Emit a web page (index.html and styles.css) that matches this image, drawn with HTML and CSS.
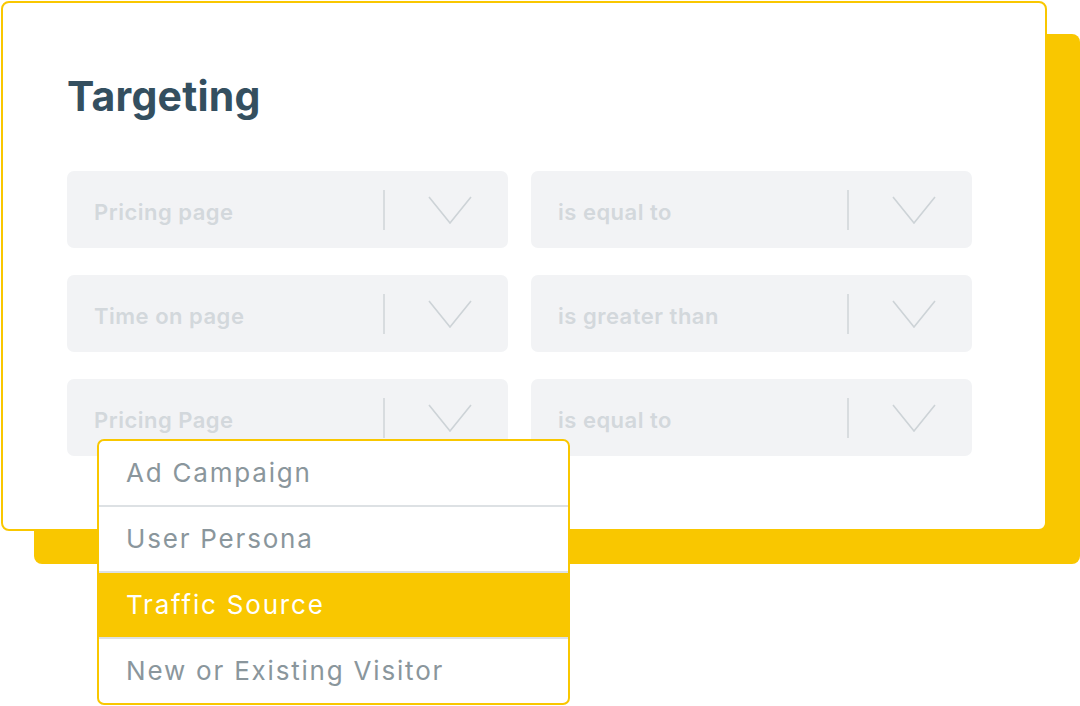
FILE: index.html
```html
<!DOCTYPE html>
<html>
<head>
<meta charset="utf-8">
<link rel="stylesheet" href="styles.css">
</head>
<body>
<div class="stage">
  <div class="card">
    <h1 class="title">Targeting</h1>
    <div class="fields">
      <div class="field"><span class="label">Pricing page</span><span class="divider"></span><svg class="chev" viewBox="0 0 44 28"><polyline points="1,1 22,27 43,1"/></svg></div>
      <div class="field"><span class="label">is equal to</span><span class="divider"></span><svg class="chev" viewBox="0 0 44 28"><polyline points="1,1 22,27 43,1"/></svg></div>
      <div class="field"><span class="label">Time on page</span><span class="divider"></span><svg class="chev" viewBox="0 0 44 28"><polyline points="1,1 22,27 43,1"/></svg></div>
      <div class="field"><span class="label">is greater than</span><span class="divider"></span><svg class="chev" viewBox="0 0 44 28"><polyline points="1,1 22,27 43,1"/></svg></div>
      <div class="field"><span class="label">Pricing Page</span><span class="divider"></span><svg class="chev" viewBox="0 0 44 28"><polyline points="1,1 22,27 43,1"/></svg></div>
      <div class="field"><span class="label">is equal to</span><span class="divider"></span><svg class="chev" viewBox="0 0 44 28"><polyline points="1,1 22,27 43,1"/></svg></div>
    </div>
  </div>
  <ul class="menu">
    <li class="item">Ad Campaign</li>
    <li class="item">User Persona</li>
    <li class="item active">Traffic Source</li>
    <li class="item">New or Existing Visitor</li>
  </ul>
</div>
</body>
</html>
```
FILE: styles.css
```css
html, body {
  margin: 0;
  padding: 0;
  background: #ffffff;
}
body {
  width: 1080px;
  height: 706px;
  overflow: hidden;
  font-family: "Inter", "Liberation Sans", sans-serif;
}
.stage {
  position: relative;
  width: 1080px;
  height: 706px;
}
.card {
  margin: 1px 0 0 1px;
  width: 1046px;
  height: 530px;
  box-sizing: border-box;
  border: 2px solid #f9c700;
  border-radius: 8px;
  background: #ffffff;
  box-shadow: 33px 33px 0 0 #f9c700;
  padding: 68px 0 0 64px;
}
.title {
  margin: 0;
  font-size: 41px;
  line-height: 50px;
  font-weight: 700;
  color: #344f5f;
  letter-spacing: 0.2px;
}
.fields {
  margin-top: 50px;
  display: grid;
  grid-template-columns: 441px 441px;
  column-gap: 23px;
  row-gap: 27px;
}
.field {
  height: 77px;
  background: #f2f3f5;
  border-radius: 7px;
  display: flex;
  align-items: center;
  padding: 0 36px 0 27px;
}
.label {
  flex: 1;
  font-size: 22px;
  font-weight: 600;
  color: #d3d8dc;
  letter-spacing: 0.5px;
  padding-top: 4px;
}
.divider {
  width: 2px;
  height: 40px;
  background: #d8dcdf;
  margin-right: 43px;
}
.chev {
  width: 44px;
  height: 28px;
  fill: none;
  stroke: #cdd3d7;
  stroke-width: 1.6;
}
.menu {
  position: absolute;
  left: 97px;
  top: 438px;
  width: 473px;
  margin: 0;
  padding: 0;
  list-style: none;
  box-sizing: border-box;
  border: 2px solid #f9c700;
  border-radius: 7px;
  background: #ffffff;
  overflow: hidden;
}
.item {
  height: 64px;
  line-height: 64px;
  padding-left: 27px;
  font-size: 26px;
  color: #8a969c;
  border-bottom: 2px solid #dde1e4;
  letter-spacing: 1.8px;
}
.item:last-child {
  border-bottom: none;
}
.item.active {
  background: #f9c700;
  color: #ffffff;
}
```
